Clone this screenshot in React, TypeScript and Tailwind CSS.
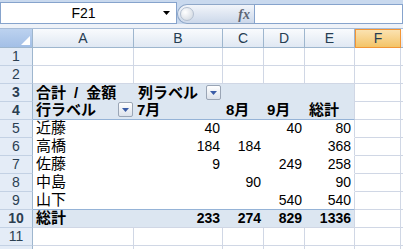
import React from "react";

const FONT = { fontFamily: "'Liberation Sans','Noto Sans CJK JP',sans-serif" };

function DropBtn() {
  return (
    <div className="w-[15px] h-[15px] shrink-0 rounded-[2px] border border-[#9aa5b5] bg-linear-to-b from-[#ffffff] to-[#dce2eb] flex items-center justify-center">
      <svg width="7" height="4" viewBox="0 0 7 4">
        <path d="M0 0H7L3.5 4Z" fill="#3a5ca6" />
      </svg>
    </div>
  );
}

function RowHead({ n }: { n?: number }) {
  return (
    <div className="w-[33px] shrink-0 h-full flex items-center justify-center bg-[#e4ecf7] border-r border-r-[#9eb6ce] border-b border-b-[#c3d1e4] text-[#2b3f52] text-[14px]">
      {n}
    </div>
  );
}

const W = ["w-[101px]", "w-[89px]", "w-[41px]", "w-[41px]", "w-[50px]", "w-[46px]"];

function PlainRow({ n }: { n?: number }) {
  return (
    <div className="flex h-[18px]">
      <RowHead n={n} />
      <div className="w-[101px] shrink-0 border-r border-b border-[#d0d7e5]" />
      <div className="w-[89px] shrink-0 border-r border-b border-[#d0d7e5]" />
      <div className="w-[41px] shrink-0 border-r border-b border-[#d0d7e5]" />
      <div className="w-[41px] shrink-0 border-r border-b border-[#d0d7e5]" />
      <div className="w-[50px] shrink-0 border-r border-b border-[#d0d7e5]" />
      <div className="w-[46px] shrink-0 border-r border-b border-[#d0d7e5]" />
      <div className="flex-1 border-b border-[#d0d7e5]" />
    </div>
  );
}

function Tail() {
  return (
    <>
      <div className="w-[46px] shrink-0 border-r border-b border-[#d0d7e5]" />
      <div className="flex-1 border-b border-[#d0d7e5]" />
    </>
  );
}

function BodyRow({
  n,
  name,
  vals,
  bottom,
}: {
  n: number;
  name: string;
  vals: string[];
  bottom?: boolean;
}) {
  const bb = bottom ? "border-b-[#95b3d7]" : "border-b-white";
  return (
    <div className="flex h-[18px]">
      <RowHead n={n} />
      <div className={`w-[101px] shrink-0 border-b ${bb} flex items-center pl-[3px] text-[15px] text-black`}>
        {name}
      </div>
      <div className={`w-[89px] shrink-0 border-b ${bb} flex items-center justify-end pr-[3px] text-[14px] text-black`}>
        {vals[0]}
      </div>
      <div className={`w-[41px] shrink-0 border-b ${bb} flex items-center justify-end pr-[3px] text-[14px] text-black`}>
        {vals[1]}
      </div>
      <div className={`w-[41px] shrink-0 border-b ${bb} flex items-center justify-end pr-[3px] text-[14px] text-black`}>
        {vals[2]}
      </div>
      <div className={`w-[50px] shrink-0 border-b ${bb} border-r border-r-[#d0d7e5] flex items-center justify-end pr-[3px] text-[14px] text-black`}>
        {vals[3]}
      </div>
      <Tail />
    </div>
  );
}

export default function App() {
  const body = [
    { n: 5, name: "近藤", vals: ["40", "", "40", "80"] },
    { n: 6, name: "高橋", vals: ["184", "184", "", "368"] },
    { n: 7, name: "佐藤", vals: ["9", "", "249", "258"] },
    { n: 8, name: "中島", vals: ["", "90", "", "90"] },
    { n: 9, name: "山下", vals: ["", "", "540", "540"] },
  ];
  return (
    <div className="w-[403px] h-[249px] overflow-hidden bg-white" style={FONT}>
      {/* formula bar */}
      <div className="h-[29px] flex flex-col bg-[#c9d9ee]">
        <div className="flex h-[24px] pt-[2px]">
          <div className="w-[177px] shrink-0 h-[22px] bg-white border border-[#86a3cc] flex items-center">
            <div className="flex-1 text-center text-[14px] text-black pl-[6px]">F21</div>
            <div className="w-[16px] flex items-center justify-center pr-[4px]">
              <svg width="7" height="4" viewBox="0 0 7 4">
                <path d="M0 0H7L3.5 4Z" fill="#000" />
              </svg>
            </div>
          </div>
          <div className="w-[77px] shrink-0 h-[22px] flex items-end">
            <div className="h-[20px] w-full rounded-l-full border border-r-0 border-[#8ea7c8] bg-linear-to-b from-[#f2f5fa] to-[#ccd8ea] flex items-center">
              <div className="ml-[2px] w-[14px] h-[14px] rounded-full border border-[#b4c0d0] bg-radial-[at_35%_35%] from-[#ffffff] to-[#ccd4de]" />
              <div className="flex-1" />
              <span className="mr-[4px] text-[14px] italic font-bold text-[#5d6675]" style={{ fontFamily: "'Liberation Serif',serif" }}>
                fx
              </span>
            </div>
          </div>
          <div className="flex-1 h-[22px] flex items-end">
            <div className="h-[20px] w-full bg-white border border-[#86a3cc]" />
          </div>
        </div>
        <div className="flex-1 bg-[#eef2f8] border-b border-[#a8bcd6]" />
      </div>

      {/* column headers */}
      <div className="flex h-[19px]">
        <div className="w-[33px] shrink-0 bg-linear-to-b from-[#bcd2ef] to-[#a3bfe6] border-r border-b border-[#9eb6ce] flex items-end justify-end pr-[2px] pb-[2px]">
          <svg width="9" height="9" viewBox="0 0 9 9">
            <path d="M9 0V9H0Z" fill="#ffffff" />
          </svg>
        </div>
        {["A", "B", "C", "D", "E"].map((c, i) => (
          <div
            key={c}
            className={`${W[i]} shrink-0 bg-linear-to-b from-[#f9fbfd] to-[#e0e8f3] border-r border-b border-[#9eb6ce] flex items-center justify-center text-[14px] text-[#263d52]`}
          >
            {c}
          </div>
        ))}
        <div className="w-[46px] shrink-0 bg-linear-to-b from-[#fbe2b0] to-[#f3c466] border border-[#f29536] flex items-center justify-center text-[14px] text-[#263d52]">
          F
        </div>
        <div className="flex-1 bg-linear-to-b from-[#f9fbfd] to-[#e0e8f3] border-b border-[#9eb6ce]" />
      </div>

      <PlainRow n={1} />
      <PlainRow n={2} />

      {/* row 3 */}
      <div className="flex h-[18px] font-bold text-black">
        <RowHead n={3} />
        <div className="w-[101px] shrink-0 bg-[#dce6f1] flex items-center pl-[3px] text-[15px]">
          <span>合計</span>
          <span className="mx-[8px]">/</span>
          <span>金額</span>
        </div>
        <div className="w-[89px] shrink-0 bg-[#dce6f1] flex justify-between pl-[4px] pr-[2px] text-[15px]">
          <span className="self-center">列ラベル</span>
          <div className="pt-[1px]">
            <DropBtn />
          </div>
        </div>
        <div className="w-[41px] shrink-0 bg-[#dce6f1]" />
        <div className="w-[41px] shrink-0 bg-[#dce6f1]" />
        <div className="w-[50px] shrink-0 bg-[#dce6f1] border-r border-[#d0d7e5]" />
        <Tail />
      </div>

      {/* row 4 */}
      <div className="flex h-[18px] font-bold text-black">
        <RowHead n={4} />
        <div className="w-[101px] shrink-0 bg-[#dce6f1] border-b border-[#95b3d7] flex justify-between pl-[3px] pr-[1px] text-[15px]">
          <span className="self-center">行ラベル</span>
          <div>
            <DropBtn />
          </div>
        </div>
        <div className="w-[89px] shrink-0 bg-[#dce6f1] border-b border-[#95b3d7] flex items-center pl-[3px] text-[15px]">7月</div>
        <div className="w-[41px] shrink-0 bg-[#dce6f1] border-b border-[#95b3d7] flex items-center pl-[3px] text-[15px]">8月</div>
        <div className="w-[41px] shrink-0 bg-[#dce6f1] border-b border-[#95b3d7] flex items-center pl-[3px] text-[15px]">9月</div>
        <div className="w-[50px] shrink-0 bg-[#dce6f1] border-b border-b-[#95b3d7] border-r border-r-[#d0d7e5] flex items-center pl-[4px] text-[15px]">総計</div>
        <Tail />
      </div>

      {body.map((r, i) => (
        <BodyRow key={r.n} n={r.n} name={r.name} vals={r.vals} bottom={i === body.length - 1} />
      ))}

      {/* row 10 */}
      <div className="flex h-[18px] font-bold text-black">
        <RowHead n={10} />
        <div className="w-[101px] shrink-0 bg-[#dce6f1] border-b border-[#d0d7e5] flex items-center pl-[3px] text-[15px]">総計</div>
        <div className="w-[89px] shrink-0 bg-[#dce6f1] border-b border-[#d0d7e5] flex items-center justify-end pr-[3px] text-[14px]">233</div>
        <div className="w-[41px] shrink-0 bg-[#dce6f1] border-b border-[#d0d7e5] flex items-center justify-end pr-[3px] text-[14px]">274</div>
        <div className="w-[41px] shrink-0 bg-[#dce6f1] border-b border-[#d0d7e5] flex items-center justify-end pr-[3px] text-[14px]">829</div>
        <div className="w-[50px] shrink-0 bg-[#dce6f1] border-b border-r border-[#d0d7e5] flex items-center justify-end pr-[3px] text-[14px]">1336</div>
        <Tail />
      </div>

      <PlainRow n={11} />
      <PlainRow />
    </div>
  );
}
